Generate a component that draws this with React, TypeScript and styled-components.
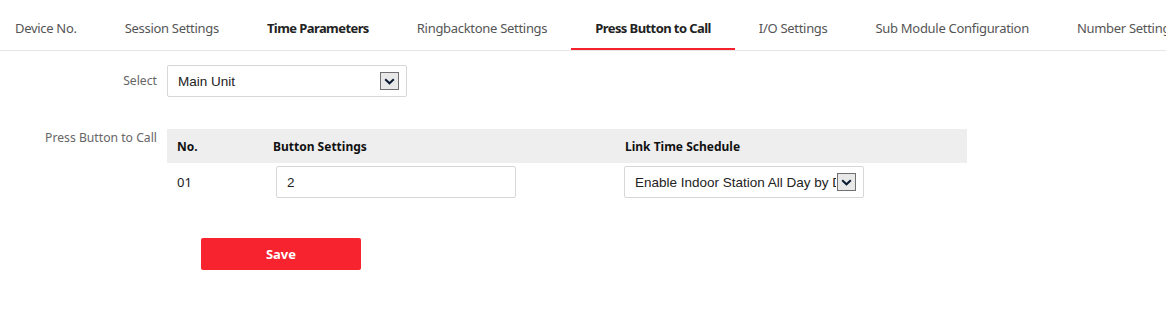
import React from "react";
import styled, { createGlobalStyle } from "styled-components";

const Global = createGlobalStyle`
  html, body { margin: 0; padding: 0; background: #fff; }
  body { font-family: "Noto Sans", "Open Sans", sans-serif; color: #333; }
  * { box-sizing: border-box; }
`;

const Page = styled.div`
  width: 1166px;
  height: 315px;
  overflow: hidden;
  background: #fff;
`;

const TabBar = styled.div`
  display: flex;
  height: 51px;
  border-bottom: 1px solid #e6e6e6;
  white-space: nowrap;
`;

const Tab = styled.div<{ $active?: boolean; $bold?: boolean; $first?: boolean }>`
  flex: none;
  height: 50px;
  padding: 8px 24px 0 ${(p) => (p.$first ? "15px" : "24px")};
  display: flex;
  align-items: center;
  font-size: 13px;
  letter-spacing: ${(p) => (p.$bold || p.$active ? "-0.58px" : "-0.3px")};
  color: ${(p) => (p.$bold || p.$active ? "#222" : "#555")};
  font-weight: ${(p) => (p.$bold || p.$active ? 700 : 400)};
  border-bottom: 2px solid ${(p) => (p.$active ? "#f5222d" : "transparent")};
`;

const Form = styled.div`
  display: flex;
  flex-direction: column;
  padding-top: 14px;
`;

const Row = styled.div<{ $mt?: number }>`
  display: flex;
  align-items: flex-start;
  margin-top: ${(p) => p.$mt ?? 0}px;
`;

const Label = styled.div<{ $pt?: number }>`
  width: 157px;
  flex: none;
  text-align: right;
  padding-top: ${(p) => p.$pt ?? 0}px;
  font-size: 12.2px;
  color: #666;
`;

const Field = styled.div`
  margin-left: 10px;
`;

const SelectBox = styled.div<{ $w: number; $h: number }>`
  width: ${(p) => p.$w}px;
  height: ${(p) => p.$h}px;
  border: 1px solid #d7d7d7;
  border-radius: 2px;
  display: flex;
  align-items: center;
  padding: 0 7px 0 10px;
  font-family: "Liberation Sans", Arial, sans-serif;
  font-size: 13.5px;
  color: #222;
  background: #fff;
`;

const SelectText = styled.span`
  flex: 1;
  overflow: hidden;
  white-space: nowrap;
  margin-right: 1px;
`;

const ArrowBox = styled.span`
  flex: none;
  width: 19px;
  height: 18px;
  border: 1px solid #707070;
  background: #e8e8e8;
  display: flex;
  align-items: center;
  justify-content: center;
`;

const Arrow = () => (
  <svg width="11" height="7" viewBox="0 0 11 7">
    <path d="M1.2 1.2 L5.5 5.3 L9.8 1.2" fill="none" stroke="#0b1a33" strokeWidth="2" />
  </svg>
);

const Select = ({ w, h, value }: { w: number; h: number; value: string }) => (
  <SelectBox $w={w} $h={h}>
    <SelectText>{value}</SelectText>
    <ArrowBox>
      <Arrow />
    </ArrowBox>
  </SelectBox>
);

const Table = styled.div`
  width: 800px;
  display: flex;
  flex-direction: column;
`;

const Grid = styled.div<{ $head?: boolean }>`
  display: grid;
  grid-template-columns: 96px 352px 1fr;
  align-items: center;
  height: ${(p) => (p.$head ? 34 : 36)}px;
  background: ${(p) => (p.$head ? "#eeeeee" : "#fff")};
  padding-top: ${(p) => (p.$head ? 0 : 2)}px;
`;

const HeadCell = styled.div`
  font-size: 12px;
  font-weight: 700;
  color: #111;
  padding-left: 10px;
  padding-top: 1px;
`;

const Cell = styled.div<{ $pl?: number }>`
  padding-left: ${(p) => p.$pl ?? 10}px;
  font-size: 13px;
  color: #222;
`;

const TextInput = styled.div`
  width: 240px;
  height: 32px;
  border: 1px solid #d7d7d7;
  border-radius: 2px;
  display: flex;
  align-items: center;
  padding-left: 10px;
  font-family: "Liberation Sans", Arial, sans-serif;
  font-size: 13.5px;
  color: #222;
`;

const SaveButton = styled.button`
  margin-left: 201px;
  margin-top: 39px;
  width: 160px;
  height: 32px;
  border: none;
  border-radius: 2px;
  background: #f7242f;
  color: #fff;
  font-family: "Noto Sans", sans-serif;
  font-size: 13px;
  font-weight: 700;
  cursor: pointer;
`;

const tabs = [
  { t: "Device No." },
  { t: "Session Settings" },
  { t: "Time Parameters", bold: true },
  { t: "Ringbacktone Settings" },
  { t: "Press Button to Call", active: true },
  { t: "I/O Settings" },
  { t: "Sub Module Configuration" },
  { t: "Number Settings" },
];

export default function App() {
  return (
    <Page>
      <Global />
      <TabBar>
        {tabs.map((x, i) => (
          <Tab key={x.t} $first={i === 0} $bold={x.bold} $active={x.active}>
            {x.t}
          </Tab>
        ))}
      </TabBar>
      <Form>
        <Row>
          <Label $pt={7}>Select</Label>
          <Field>
            <Select w={240} h={32} value="Main Unit" />
          </Field>
        </Row>
        <Row $mt={32}>
          <Label $pt={0}>Press Button to Call</Label>
          <Field>
            <Table>
              <Grid $head>
                <HeadCell>No.</HeadCell>
                <HeadCell>Button Settings</HeadCell>
                <HeadCell>Link Time Schedule</HeadCell>
              </Grid>
              <Grid>
                <Cell>01</Cell>
                <Cell $pl={13}>
                  <TextInput>2</TextInput>
                </Cell>
                <Cell $pl={9}>
                  <Select w={240} h={32} value="Enable Indoor Station All Day by Default" />
                </Cell>
              </Grid>
            </Table>
          </Field>
        </Row>
        <SaveButton>Save</SaveButton>
      </Form>
    </Page>
  );
}
